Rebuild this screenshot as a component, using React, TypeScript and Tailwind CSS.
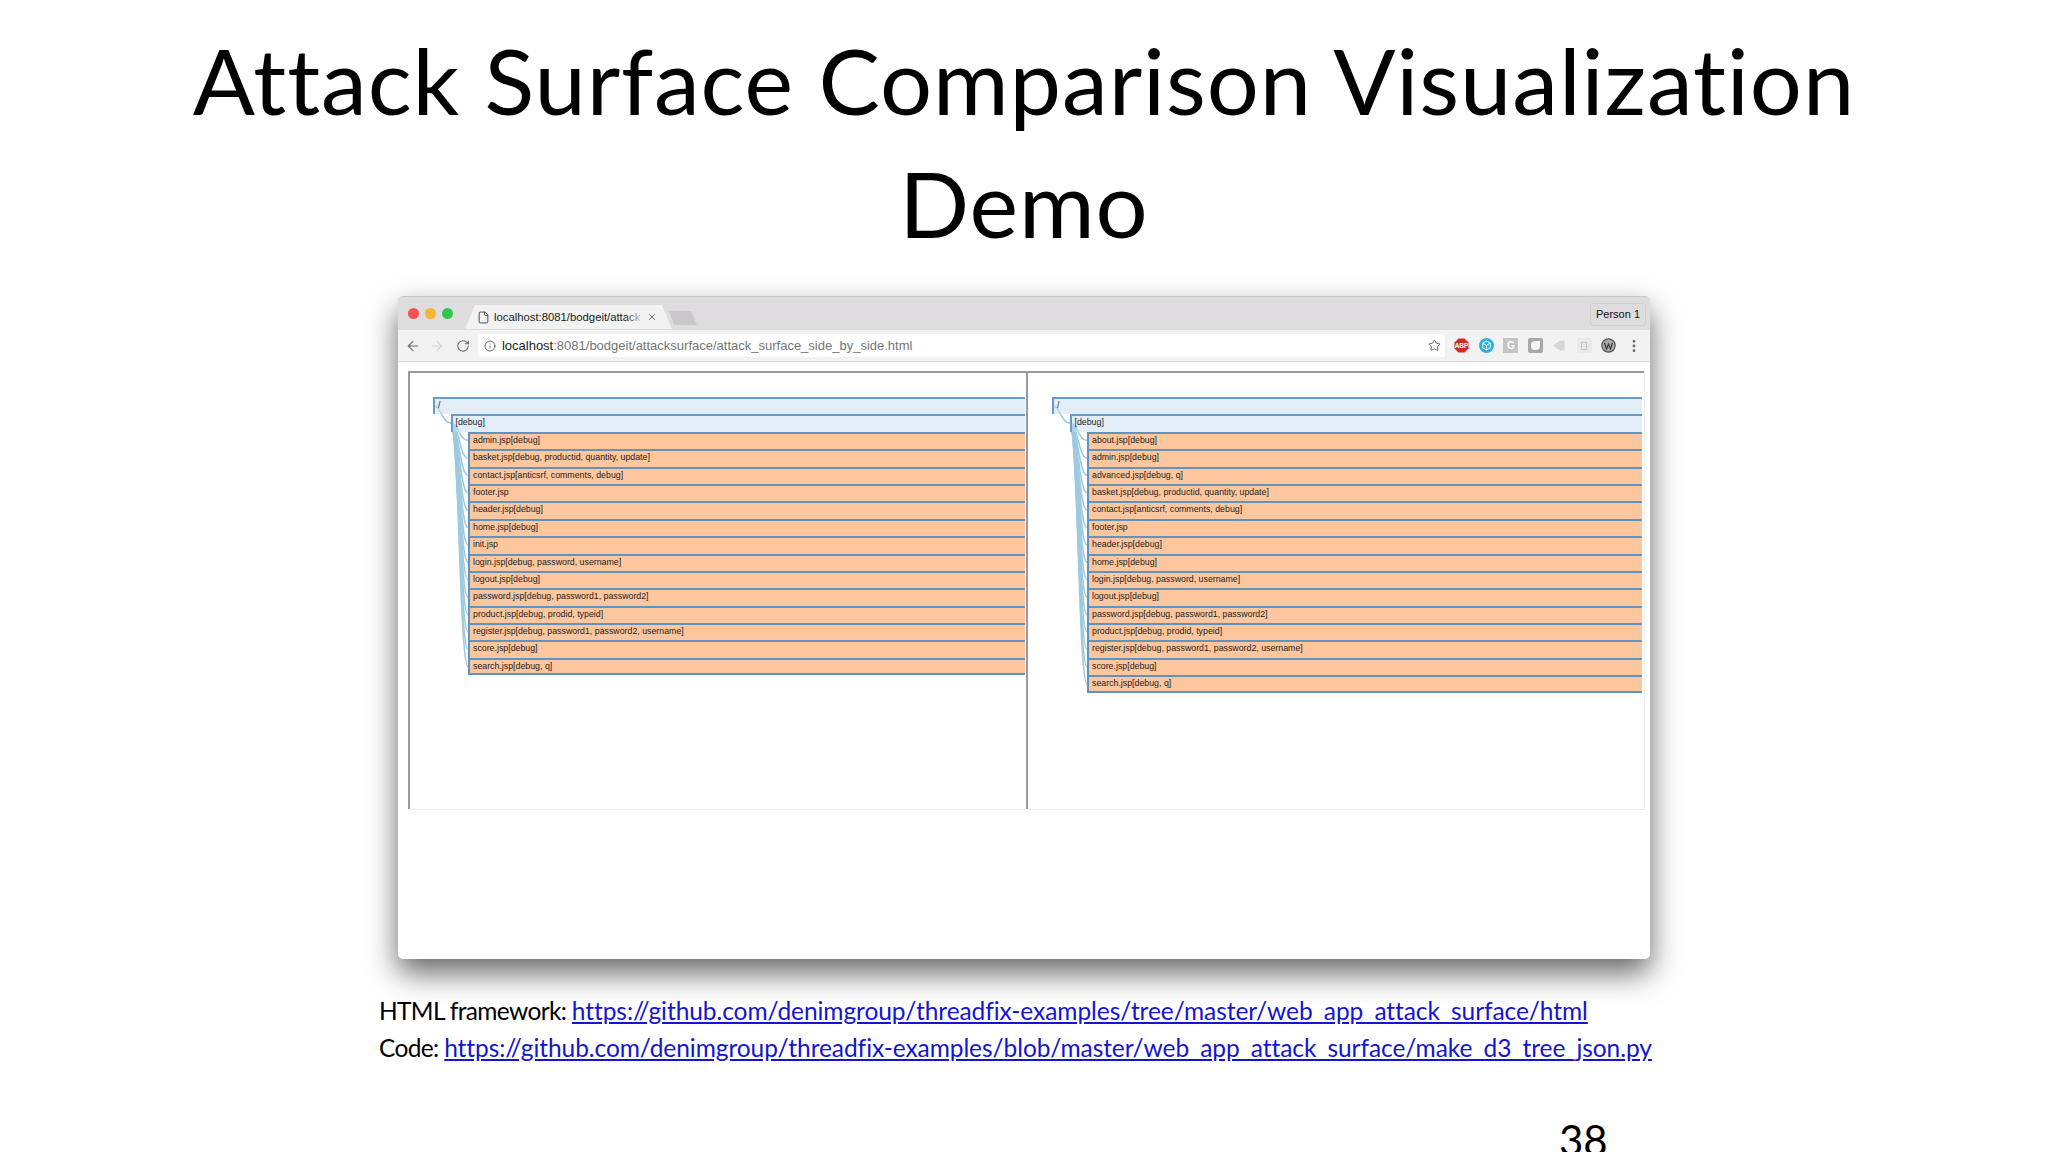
import React from 'react';
import { ArrowLeft, ArrowRight, RotateCw, Info, Star, File, X, EllipsisVertical } from 'lucide-react';

const ROW_H = 17.4;

const leftFiles = [
  'admin.jsp[debug]',
  'basket.jsp[debug, productid, quantity, update]',
  'contact.jsp[anticsrf, comments, debug]',
  'footer.jsp',
  'header.jsp[debug]',
  'home.jsp[debug]',
  'init.jsp',
  'login.jsp[debug, password, username]',
  'logout.jsp[debug]',
  'password.jsp[debug, password1, password2]',
  'product.jsp[debug, prodid, typeid]',
  'register.jsp[debug, password1, password2, username]',
  'score.jsp[debug]',
  'search.jsp[debug, q]',
];

const rightFiles = [
  'about.jsp[debug]',
  'admin.jsp[debug]',
  'advanced.jsp[debug, q]',
  'basket.jsp[debug, productid, quantity, update]',
  'contact.jsp[anticsrf, comments, debug]',
  'footer.jsp',
  'header.jsp[debug]',
  'home.jsp[debug]',
  'login.jsp[debug, password, username]',
  'logout.jsp[debug]',
  'password.jsp[debug, password1, password2]',
  'product.jsp[debug, prodid, typeid]',
  'register.jsp[debug, password1, password2, username]',
  'score.jsp[debug]',
  'search.jsp[debug, q]',
];

// d3 style horizontal diagonal between two node anchors
const diagonal = (sx: number, sy: number, tx: number, ty: number) => {
  const mx = (sx + tx) / 2;
  return `M${sx},${sy} C${mx},${sy} ${mx},${ty} ${tx},${ty}`;
};

const Tree: React.FC<{ files: string[] }> = ({ files }) => {
  const rootY = ROW_H / 2;
  const debugY = ROW_H * 1.5;
  return (
    <div className="relative font-['Liberation_Sans',sans-serif] text-[8.8px] text-[#222]">
      <svg className="absolute left-0 top-0 h-[300px] w-[40px] overflow-visible" fill="none">
        <path d={diagonal(0, rootY, 17.5, debugY)} stroke="#9ecae1" strokeWidth="1.5" />
        {files.map((_, i) => (
          <path
            key={i}
            d={diagonal(17.5, debugY, 35, ROW_H * (i + 2.5))}
            stroke="#9ecae1"
            strokeWidth="1.5"
          />
        ))}
      </svg>
      <div className="relative h-[17.4px] border-l-2 border-t-2 border-[#669dca] bg-[#c6dbef]/50 pl-[3px] leading-[13.5px]">/</div>
      <div className="relative ml-[17.5px] h-[17.4px] border-l-2 border-t-2 border-[#669dca] bg-[#c6dbef]/50 pl-[3px] leading-[13.5px]">[debug]</div>
      <div className="ml-[35px]">
        {files.map((f, i) => (
          <div
            key={f}
            className={`relative h-[17.4px] border-l-2 border-t-2 border-[#5f94c0] bg-[#fd8d3c]/50 pl-[3px] leading-[13.5px] ${
              i === files.length - 1 ? 'border-b-2' : ''
            }`}
          >
            {f}
          </div>
        ))}
      </div>
    </div>
  );
};

const Extensions: React.FC = () => (
  <div className="flex items-center gap-[9.5px] pl-[9px]">
    <svg width="15" height="15" viewBox="0 0 15 15">
      <path d="M4.5 0.5h6l4 4v6l-4 4h-6l-4-4v-6z" fill="#d02a1e" />
      <text x="7.5" y="10" textAnchor="middle" fontSize="6.5" fontWeight="700" fontFamily="Liberation Sans" fill="#fff">ABP</text>
    </svg>
    <svg width="15" height="15" viewBox="0 0 15 15">
      <circle cx="7.5" cy="7.5" r="7.5" fill="#2bb3e0" />
      <path d="M7.5 3l3.8 2.2v4.6L7.5 12 3.7 9.8V5.2zM3.7 5.2l3.8 2.2 3.8-2.2M7.5 7.4V12" fill="none" stroke="#fff" strokeWidth="0.9" />
    </svg>
    <div className="flex h-[15px] w-[15px] items-center justify-center bg-[#c4c4c4] font-['Liberation_Sans',sans-serif] text-[10px] font-bold text-white">G</div>
    <div className="flex h-[15px] w-[15px] items-center justify-center rounded-[2px] bg-[#a8a8a8]">
      <div className="h-[9px] w-[9px] rounded-[4px] rounded-tr-none bg-[#f4f4f4]" />
    </div>
    <svg width="15" height="15" viewBox="0 0 15 15">
      <path d="M1 7.5l7-5h4.5v10H8z" fill="#d6d6d6" />
    </svg>
    <div className="flex h-[15px] w-[15px] items-center justify-center rounded-[2px] bg-[#e9e9e9]">
      <div className="h-[8px] w-[6px] border border-[#c4c4c4]" />
    </div>
    <svg width="15" height="15" viewBox="0 0 15 15">
      <circle cx="7.5" cy="7.5" r="6.7" fill="#a8a8a8" stroke="#555" strokeWidth="1.2" />
      <path d="M3.5 5l2 6 2-5 2 5 2-6" fill="none" stroke="#333" strokeWidth="1.1" />
    </svg>
    <EllipsisVertical size={16} strokeWidth={2.2} className="text-[#666]" />
  </div>
);

const App: React.FC = () => {
  return (
    <div className="flex h-[1152px] w-[2048px] flex-col overflow-hidden bg-white font-[Lato,sans-serif] text-black">
      <h1 className="shrink-0 pt-[18px] text-center text-[92px] font-normal leading-[123px] tracking-[0.9px]">
        Attack Surface Comparison Visualization
        <br />
        Demo
      </h1>

      {/* browser window */}
      <div className="ml-[398px] mt-[32px] h-[663px] w-[1252px] shrink-0 rounded-[5px] bg-white shadow-[0_14px_30px_rgba(0,0,0,0.6)]">
        <div className="flex h-[33px] items-end rounded-t-[5px] border-t border-[#c8c8c8] bg-[#dedcde] font-['Liberation_Sans',sans-serif]">
          <div className="flex h-full items-center gap-[6px] self-start pl-[10px] pt-[1px]">
            <div className="h-[11px] w-[11px] rounded-full bg-[#f4524c]" />
            <div className="h-[11px] w-[11px] rounded-full bg-[#f6b62f]" />
            <div className="h-[11px] w-[11px] rounded-full bg-[#2fc84a]" />
          </div>
          <div className="relative ml-[12px] flex h-[24px] w-[207px] items-center bg-[#f2f2f2] pl-[12px] text-[11.3px] text-[#222] [clip-path:polygon(0_100%,10px_0,197px_0,100%_100%)]">
            <File size={13} strokeWidth={1.6} className="mr-[4px] shrink-0 text-[#333]" />
            <span className="w-[151px] shrink-0 overflow-hidden whitespace-nowrap">localhost:8081/bodgeit/attack</span>
            <div className="absolute left-[160px] top-0 h-full w-[20px] bg-gradient-to-r from-transparent to-[#f2f2f2]" />
            <X size={10} strokeWidth={2} className="ml-[2px] shrink-0 text-[#555]" />
          </div>
          <div className="mb-[4px] ml-[-3px] h-[14px] w-[28px] bg-[#c9c7c9] [clip-path:polygon(5px_100%,0_0,22px_0,100%_100%)]" />
          <div className="ml-auto mr-[4px] mt-[6px] flex h-[23px] w-[56px] items-center justify-center self-start rounded-[3px] border border-[#cfcfcf] text-[11px] text-[#111]">
            Person 1
          </div>
        </div>

        <div className="flex h-[33px] items-center border-y border-[#dcdcdc] bg-[#f2f2f2] pl-[7px] pr-[8px] font-['Liberation_Sans',sans-serif]">
          <ArrowLeft size={16} strokeWidth={1.6} className="text-[#666]" />
          <ArrowRight size={16} strokeWidth={1.6} className="ml-[8px] text-[#d4d4d4]" />
          <RotateCw size={14} strokeWidth={1.8} className="ml-[11px] text-[#666]" />
          <div className="ml-[8px] flex h-[23px] w-[969px] items-center rounded-[2px] bg-white pl-[6px] pr-[4px] text-[13px]">
            <Info size={12} strokeWidth={1.6} className="mr-[6px] shrink-0 text-[#444]" />
            <span className="text-[#222]">localhost</span>
            <span className="text-[#757575]">:8081/bodgeit/attacksurface/attack_surface_side_by_side.html</span>
            <Star size={13} strokeWidth={1.6} className="ml-auto text-[#555]" />
          </div>
          <Extensions />
        </div>

        <div className="ml-[10px] mt-[9px] flex h-[439px] w-[1237px] border-b border-r border-[#ececec]">
          <div className="w-[618px] overflow-hidden border-l-2 border-t-2 border-[#9a9a9a] pl-[23px] pr-[1px] pt-[24px]">
            <Tree files={leftFiles} />
          </div>
          <div className="flex-1 overflow-hidden border-l-2 border-t-2 border-[#9a9a9a] pl-[24px] pr-[2px] pt-[24px]">
            <Tree files={rightFiles} />
          </div>
        </div>
      </div>

      {/* slide footer */}
      <div className="ml-[379px] mt-[34px] shrink-0 text-[24.5px] leading-[36.5px] tracking-[-0.65px]">
        <p>
          HTML framework:{' '}
          <a className="tracking-[-0.07px] text-[#1414d2] underline" href="#">
            https://github.com/denimgroup/threadfix-examples/tree/master/web_app_attack_surface/html
          </a>
        </p>
        <p>
          Code:{' '}
          <a className="tracking-[-0.07px] text-[#1414d2] underline" href="#">
            https://github.com/denimgroup/threadfix-examples/blob/master/web_app_attack_surface/make_d3_tree_json.py
          </a>
        </p>
      </div>
      <div className="ml-[1559px] mt-[46px] shrink-0 text-[42px] leading-[56px]">38</div>
    </div>
  );
};

export default App;
